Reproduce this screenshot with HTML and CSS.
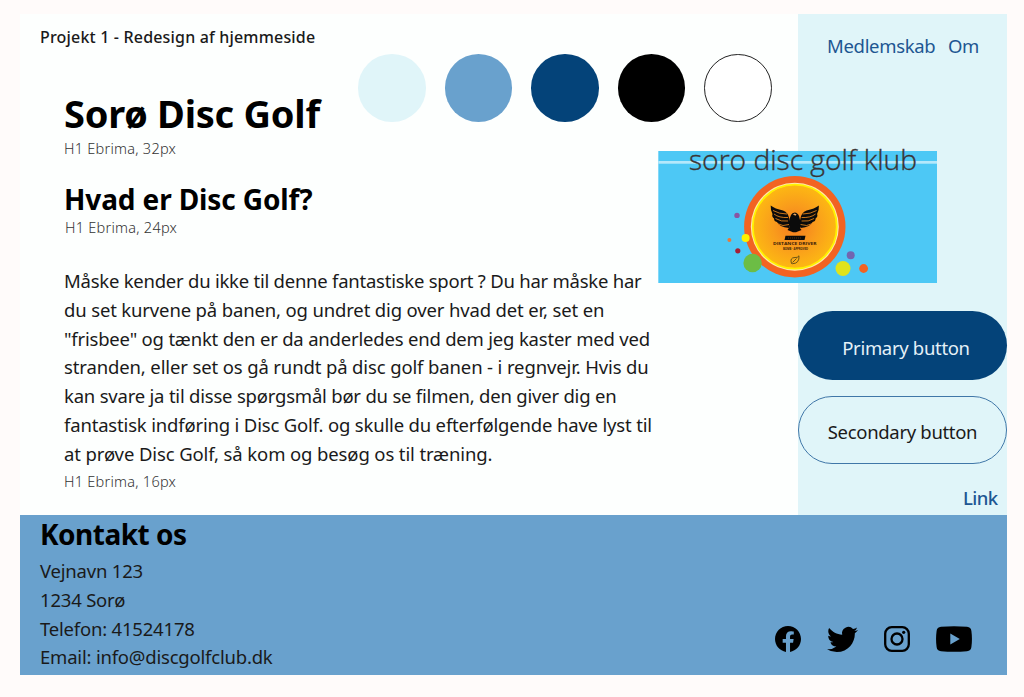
FILE: index.html
```html
<!DOCTYPE html>
<html lang="da">
<head>
<meta charset="utf-8">
<title>Sorø Disc Golf</title>
<link rel="stylesheet" href="styles.css">
</head>
<body>
<div class="board">
  <div class="upper">
    <main class="main">
      <p class="project">Projekt 1 - Redesign af hjemmeside</p>
      <div class="intro">
        <div class="titles">
          <h1 class="title"><span>Sorø Disc Golf</span></h1>
          <p class="caption">H1 Ebrima, 32px</p>
        </div>
        <div class="swatches">
          <i class="swatch pale"></i><i class="swatch blue"></i><i class="swatch navy"></i><i class="swatch black"></i><i class="swatch white"></i>
        </div>
      </div>
      <h2 class="subtitle">Hvad er Disc Golf?</h2>
      <p class="caption inset">H1 Ebrima, 24px</p>
      <p class="body">
        <span class="l1">Måske kender du ikke til denne fantastiske sport ? Du har måske har</span>
        <span class="l2">du set kurvene på banen, og undret dig over hvad det er, set en</span>
        <span class="l3">"frisbee" og tænkt den er da anderledes end dem jeg kaster med ved</span>
        <span class="l4">stranden, eller set os gå rundt på disc golf banen - i regnvejr. Hvis du</span>
        <span class="l5">kan svare ja til disse spørgsmål bør du se filmen, den giver dig en</span>
        <span class="l6">fantastisk indføring i Disc Golf. og skulle du efterfølgende have lyst til</span>
        <span class="l7">at prøve Disc Golf, så kom og besøg os til træning.</span>
      </p>
      <p class="caption last">H1 Ebrima, 16px</p>
    </main>
    <aside class="side">
      <nav class="nav"><a>Medlemskab</a><a>Om</a></nav>
      <div class="btn primary">Primary button</div>
      <div class="btn secondary">Secondary button</div>
      <a class="link">Link</a>
    </aside>
    <svg class="logo" width="280" height="140" viewBox="0 0 280 140">
      <defs>
        <radialGradient id="disc"><stop offset="0" stop-color="#f47b20"/><stop offset=".5" stop-color="#f99b1c"/><stop offset="1" stop-color="#fdb813"/></radialGradient>
      </defs>
      <rect x=".3" y="8" width="278.7" height="132" fill="#4dc8f5"/>
      <rect x=".3" y="18" width="278.7" height="2.7" fill="#b5e8fb"/>
      <text class="logo-name" x="31" y="27" textLength="228" lengthAdjust="spacingAndGlyphs">soro disc golf klub</text>
      <circle cx="136.8" cy="83.7" r="50.7" fill="#f26322"/>
      <circle cx="136.8" cy="83.7" r="44" fill="#ffe9a8"/>
      <circle cx="136.8" cy="83.7" r="42" fill="url(#disc)" stroke="#fff200" stroke-width="1.8"/>
      <g fill="#0b0b0b">
        <path d="M112.7 62.6 Q117 66 125 67.5 Q130.5 69 131.5 77 L133 80 L131 85 Q121 84 119 79 Q116 78.5 116 75.5 Q113.5 73.5 114.5 71 Q112.5 68 112.7 62.6Z"/>
        <path d="M160.9 62.6 Q156.6 66 148.6 67.5 Q143.1 69 142.1 77 L140.6 80 L142.6 85 Q152.6 84 154.6 79 Q157.6 78.5 157.6 75.5 Q160.1 73.5 159.1 71 Q161.1 68 160.9 62.6Z"/>
        <path d="M133 72 Q134 69.5 136.8 69.5 Q139.5 69.500 141 73 L142 77 L142 85 L143.500 87 L138 89.300 L135 89.300 L129.500 87 L131.500 84 L131.500 76Z"/>
        <path d="M127.500 92.700 H147.500 L146.500 97 H126.500Z"/>
      </g>
      <path d="M115 67.500Q121 71 129 71M116 71Q121 75 130 74.500M117.500 75.500Q123 79 130 78M119 80.500Q125 84 131 81.500M158.600 67.500Q152.600 71 144.600 71M157.600 71Q152.600 75 143.600 74.500M156.100 75.500Q150.600 79 143.600 78M154.600 80.500Q148.600 84 142.600 81.500" fill="none" stroke="#f78f1e" stroke-width=".8"/>
      <path d="M135 71.500l1.500-1 2 .7-1 1.500z" fill="#e9a65f"/>
      <path d="M130 95h13" stroke="#8a4e16" stroke-width=".6" stroke-dasharray="1 1"/>
      <text class="disc-name" x="115" y="101.600" textLength="43.500" lengthAdjust="spacingAndGlyphs">DISTANCE DRIVER</text>
      <text class="disc-note" x="125" y="106.600" textLength="25" lengthAdjust="spacingAndGlyphs">BOMB · APPROVED</text>
      <path d="M133.500 120.500Q131.500 114.500 137 114.500Q139.500 115 141 112.800Q141.500 120.500 134.500 120.700ZM134.500 119.500L138.500 115.500" fill="none" stroke="#5b4a16" stroke-width=".9"/>
      <circle cx="79" cy="72.400" r="2.700" fill="#8a55a3"/>
      <circle cx="71.400" cy="97" r="2" fill="#e8793a"/>
      <circle cx="87.600" cy="94.900" r="4" fill="#fff200"/>
      <circle cx="79.800" cy="107.800" r="2.600" fill="#a61f35"/>
      <circle cx="94.600" cy="120" r="9.200" fill="#6cbd45"/>
      <circle cx="192.700" cy="112.300" r="4" fill="#7266b0"/>
      <circle cx="185" cy="125.500" r="7.500" fill="#dfe31c"/>
      <circle cx="205.600" cy="125.500" r="4.400" fill="#f26322"/>
    </svg>
  </div>
  <footer class="footer">
    <div class="contact">
      <h2 class="contact-title">Kontakt os</h2>
      <p>Vejnavn 123</p>
      <p>1234 Sorø</p>
      <p>Telefon: 41524178</p>
      <p>Email: info@discgolfclub.dk</p>
    </div>
    <div class="social">
      <svg width="26" height="26" viewBox="0 0 24 24"><path d="M24 12.073c0-6.627-5.373-12-12-12s-12 5.373-12 12c0 5.990 4.388 10.954 10.125 11.854v-8.385H7.078v-3.470h3.047V9.430c0-3.007 1.792-4.669 4.533-4.669 1.312 0 2.686.235 2.686.235v2.953H15.830c-1.491 0-1.956.925-1.956 1.874v2.250h3.328l-.532 3.470h-2.796v8.385C19.612 23.027 24 18.062 24 12.073z"/></svg>
      <svg width="31" height="31" viewBox="0 0 24 24"><path d="M23.953 4.570a10 10 0 01-2.825.775 4.958 4.958 0 002.163-2.723c-.951.555-2.005.959-3.127 1.184a4.920 4.920 0 00-8.384 4.482C7.690 8.095 4.067 6.130 1.640 3.162a4.822 4.822 0 00-.666 2.475c0 1.710.870 3.213 2.188 4.096a4.904 4.904 0 01-2.228-.616v.060a4.923 4.923 0 003.946 4.827 4.996 4.996 0 01-2.212.085 4.936 4.936 0 004.604 3.417 9.867 9.867 0 01-6.102 2.105c-.390 0-.779-.023-1.170-.067a13.995 13.995 0 007.557 2.209c9.053 0 13.998-7.496 13.998-13.985 0-.210 0-.420-.015-.630A9.935 9.935 0 0024 4.590z"/></svg>
      <svg width="26" height="26" viewBox="0 0 26 26"><rect x="1.200" y="1.200" width="23.600" height="23.600" rx="6.500" fill="none" stroke="#000" stroke-width="2.300"/><circle cx="13" cy="13" r="5.500" fill="none" stroke="#000" stroke-width="2.300"/><circle cx="19.700" cy="6.300" r="1.600"/></svg>
      <svg width="36" height="26" viewBox="0 0 36 26"><path fill-rule="evenodd" d="M5 .8Q18-.5 31 .8 35 1.200 35.400 5 36.500 13 35.400 21 35 24.800 31 25.200 18 26.500 5 25.200 1 24.800.6 21-.5 13 .6 5 1 1.200 5 .8ZM14.300 7.600V18.400L23.800 13Z"/></svg>
    </div>
  </footer>
</div>
</body>
</html>
```
FILE: styles.css
```css
* { box-sizing: border-box; }
body { margin: 0; padding: 14px 17px 22px 20px; height: 697px; background: #fffbfa; font-family: "Noto Sans", "Open Sans", sans-serif; color: #1a1a1a; }
h1, h2, p { margin: 0; white-space: nowrap; }
.board { height: 661px; display: flex; flex-direction: column; }
.upper { position: relative; height: 501px; display: flex; }
.main { width: 778px; padding: 11px 0 0 44px; background: #fdfffe; }
.project { margin-left: -24px; font-size: 16px; line-height: 24px; font-weight: 500; letter-spacing: .18px; }
.intro { display: flex; }
.titles { width: 294px; padding-top: 37px; }
.title { font-size: 38px; line-height: 54px; letter-spacing: -.25px; color: #000; }
.caption { margin-top: -2px; font-size: 14.500px; line-height: 20px; letter-spacing: .25px; font-weight: 300; color: #333; }
.swatches { display: flex; gap: 19px; padding-top: 5.400px; }
.swatch { width: 67.500px; height: 67.500px; border-radius: 50%; }
.pale { background: #e0f5f9; }
.blue { background: #69a1cd; }
.navy { background: #044379; }
.black { background: #000; }
.white { background: #fff; border: 1.500px solid #222; }
.subtitle { margin-top: 21px; font-size: 28px; line-height: 40px; letter-spacing: -.12px; color: #000; }
.inset { padding-left: 1px; }
.body { margin-top: 30px; font-size: 18.500px; line-height: 28.800px; }
.body span { display: block; width: max-content; }
.l1 { letter-spacing: -.24px; }
.l2 { letter-spacing: -.15px; }
.l3 { letter-spacing: -.2px; }
.l4 { letter-spacing: -.13px; }
.l5 { letter-spacing: -.21px; }
.l6 { letter-spacing: -.175px; }
.l7 { letter-spacing: -.12px; }
.last { margin-top: 2px; }
.side { width: 209px; background: #e0f5f9; display: flex; flex-direction: column; font-size: 18.500px; letter-spacing: -.32px; }
.nav { display: flex; gap: 12.500px; padding: 18px 0 0 29px; line-height: 28px; color: #1d5692; margin-bottom: 251px; }
.btn { height: 69px; border-radius: 35px; display: flex; align-items: center; justify-content: center; white-space: nowrap; }
.primary { background: #044379; color: #e5f1f8; padding: 3px 0 0 7px; }
.secondary { height: 68px; margin-top: 16px; border: 1.500px solid #4077a8; padding-top: 3px; }
.link { align-self: flex-end; margin: 20px 9.500px 0 0; line-height: 28px; font-weight: 500; letter-spacing: -.6px; color: #1d5692; }
.logo { position: absolute; left: 638px; top: 129px; overflow: visible; }
.logo-name { font: 300 27px "Open Sans", sans-serif; fill: #3a3434; stroke: #3a3434; stroke-width: .35px; }
.disc-name { font: 700 4px "Open Sans", sans-serif; fill: #3b2108; }
.disc-note { font: 700 2.500px "Open Sans", sans-serif; fill: #3b2108; }
.footer { height: 160px; background: #69a1cd; display: flex; justify-content: space-between; padding: 0 35px 0 20px; }
.contact { font-size: 18.500px; line-height: 28.800px; letter-spacing: -.2px; }
.contact-title { margin: -1px 0 3px; font-size: 28px; line-height: 40px; letter-spacing: -.5px; color: #000; }
.social { display: flex; align-items: center; gap: 26px; padding-top: 88px; }
```
